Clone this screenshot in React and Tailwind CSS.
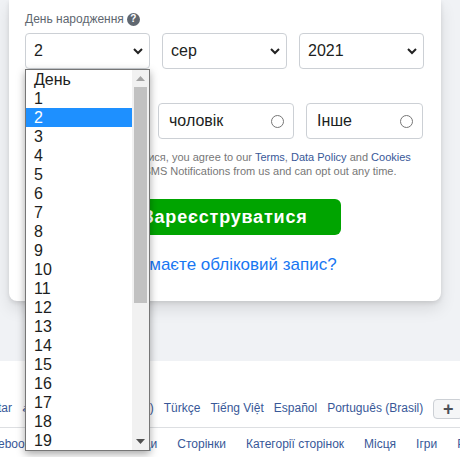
const days = ["День", ...Array.from({ length: 19 }, (_, i) => String(i + 1))];
const languages = ["Qırımtatar", "العربية", "Nederlands (BE)", "Türkçe", "Tiếng Việt", "Español", "Português (Brasil)"];
const links = ["Facebook Lite", "Watch", "Люди", "Сторінки", "Категорії сторінок", "Місця", "Ігри", "Розташування"];

function Chevron() {
  return (
    <svg viewBox="0 0 10 7" className="h-[7px] w-[10px] shrink-0">
      <path d="M1 1l4 4 4-4" fill="none" stroke="#222" strokeWidth="2" />
    </svg>
  );
}

function FakeSelect({ value }) {
  return (
    <div className="flex h-9 flex-1 items-center justify-between rounded border border-[#ccd0d5] pl-2 pr-[6px] text-base text-[#1c1e21]">
      <span>{value}</span>
      <Chevron />
    </div>
  );
}

function GenderBox({ label, className }) {
  return (
    <div className={`flex h-9 items-center justify-between rounded border border-[#ccd0d5] pl-[10px] pr-[9px] text-base text-[#1c1e21] ${className}`}>
      <span>{label}</span>
      <span className="h-[13px] w-[13px] rounded-full border border-[#767676]" />
    </div>
  );
}

function DayDropdown() {
  return (
    <div className="absolute left-[25px] top-[69px] z-10 flex h-[382px] w-[125px] border border-[#767676] bg-white shadow-[0_3px_8px_rgba(0,0,0,0.35)]">
      <div className="flex-1 text-base leading-[19px] text-[#1c1e21]">
        {days.map((day) => (
          <div key={day} className={`h-[19px] pl-2 ${day === "2" ? "bg-[#1e90ff] text-white" : ""}`}>
            {day}
          </div>
        ))}
      </div>
      <div className="relative w-[17px] bg-[#f1f1f1]">
        <svg viewBox="0 0 9 5" className="absolute left-1 top-[6px] h-[5px] w-[9px]">
          <path d="M0 5 4.5 0 9 5z" fill="#a3a3a3" />
        </svg>
        <div className="absolute left-[2px] top-[17px] h-[216px] w-[13px] bg-[#c1c1c1]" />
        <svg viewBox="0 0 9 5" className="absolute bottom-[6px] left-1 h-[5px] w-[9px]">
          <path d="M0 0h9L4.500 5z" fill="#505050" />
        </svg>
      </div>
    </div>
  );
}

export default function App() {
  return (
    <div className="relative h-[457px] w-[460px] overflow-hidden bg-white font-['Liberation_Sans',Arial,sans-serif]">
      <div className="h-[361px] bg-[#f0f2f5] pl-[9px]">
        <div className="h-[301px] w-[432px] rounded-b-lg bg-white px-4 shadow-[0_2px_4px_rgba(0,0,0,0.1),0_8px_16px_rgba(0,0,0,0.1)]">
          <div className="flex h-[33px] items-center gap-[3px] pt-[5px] text-xs text-[#606770]">
            <span>День народження</span>
            <span className="flex h-[13px] w-[13px] items-center justify-center rounded-full bg-[#606770] text-[10px] font-bold text-white">?</span>
          </div>
          <div className="flex gap-3 pr-[1px]">
            <FakeSelect value="2" />
            <FakeSelect value="сер" />
            <FakeSelect value="2021" />
          </div>
          <div className="mt-[34px] flex gap-3 pr-[2px]">
            <GenderBox label="Жінка" className="w-[121px]" />
            <GenderBox label="чоловік" className="w-[136px]" />
            <GenderBox label="Інше" className="w-[117px]" />
          </div>
          <p className="mt-[11px] w-[390px] text-[11px] leading-[14px] text-[#777]">
            Натиснувши Реєструватися, you agree to our <span className="text-[#385898]">Terms</span>, <span className="text-[#385898]">Data Policy</span> and <span className="text-[#385898]">Cookies</span> <span className="text-[#385898]">Policy</span>. You may receive SMS Notifications from us and can opt out any time.
          </p>
          <div className="mt-[21px] flex justify-center">
            <div className="flex h-9 w-[232px] items-center justify-center rounded-md bg-[#00a400] text-lg font-bold tracking-[0.8px] text-white">
              Зареєструватися
            </div>
          </div>
          <p className="mt-[17px] pr-[1px] text-center text-[17px] text-[#1877f2]">Вже маєте обліковий запис?</p>
        </div>
      </div>

      <div className="ml-[-42px] mt-[38px] flex h-7 items-start gap-[10px] whitespace-nowrap text-xs leading-[19px] text-[#385898]">
        {languages.map((lang) => (
          <span key={lang}>{lang}</span>
        ))}
        <span className="flex h-5 w-[30px] shrink-0 items-center justify-center rounded-sm border border-[#ccd0d5] bg-[#f5f6f7] text-lg font-bold text-[#4b4f56]">+</span>
      </div>
      <div className="border-t border-[#dddfe2] pt-2">
        <div className="ml-[-22px] flex gap-5 whitespace-nowrap text-xs text-[#385898]">
          {links.map((link) => (
            <span key={link}>{link}</span>
          ))}
        </div>
      </div>

      <DayDropdown />
    </div>
  );
}
